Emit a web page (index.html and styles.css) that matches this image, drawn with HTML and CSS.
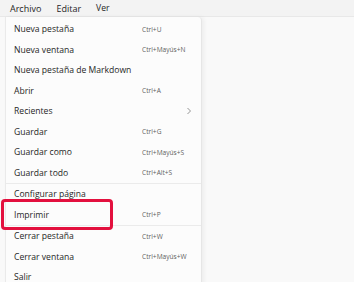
FILE: index.html
```html
<!DOCTYPE html>
<html lang="es">
<head>
  <meta charset="UTF-8">
  <title>Bloc de notas</title>
  <link rel="stylesheet" href="styles.css">
</head>
<body>
  <nav class="menubar">
    <span class="menubar-item">Archivo</span>
    <span class="menubar-item">Editar</span>
    <span class="menubar-item">Ver</span>
  </nav>
  <div class="workspace">
    <ul class="menu">
      <li class="menu-item"><span>Nueva pestaña</span><span class="shortcut">Ctrl+U</span></li>
      <li class="menu-item"><span>Nueva ventana</span><span class="shortcut">Ctrl+Mayús+N</span></li>
      <li class="menu-item"><span>Nueva pestaña de Markdown</span></li>
      <li class="menu-item"><span>Abrir</span><span class="shortcut">Ctrl+A</span></li>
      <li class="menu-item"><span>Recientes</span>
        <svg class="chevron" width="6" height="8" viewBox="0 0 6 8"><path d="M1.5 1 L4.5 4 L1.5 7" fill="none" stroke="#888" stroke-width="0.9"/></svg>
      </li>
      <li class="menu-item"><span>Guardar</span><span class="shortcut">Ctrl+G</span></li>
      <li class="menu-item"><span>Guardar como</span><span class="shortcut">Ctrl+Mayús+S</span></li>
      <li class="menu-item"><span>Guardar todo</span><span class="shortcut">Ctrl+Alt+S</span></li>
      <li class="separator"></li>
      <li class="menu-item"><span>Configurar página</span></li>
      <li class="menu-item highlighted"><span>Imprimir</span><span class="shortcut">Ctrl+P</span></li>
      <li class="separator"></li>
      <li class="menu-item"><span>Cerrar pestaña</span><span class="shortcut">Ctrl+W</span></li>
      <li class="menu-item"><span>Cerrar ventana</span><span class="shortcut">Ctrl+Mayús+W</span></li>
      <li class="menu-item"><span>Salir</span></li>
    </ul>
  </div>
</body>
</html>
```

FILE: styles.css
```css
*,
*::before,
*::after {
  box-sizing: border-box;
}

html,
body {
  margin: 0;
  padding: 0;
  height: 100%;
  overflow: hidden;
  background: #f9f9f9;
  font-family: 'Open Sans', sans-serif;
  color: #262626;
}

.menubar {
  display: flex;
  align-items: center;
  height: 17px;
  padding-left: 4px;
  background: #f3f3f3;
  border-bottom: 1px solid #e8e8e8;
  font-size: 9px;
}

.menubar-item {
  padding: 0 6px;
  margin-right: 3px;
}

.menubar-item:last-child {
  font-size: 8.6px;
}

.workspace {
  padding-left: 5px;
}

.menu {
  list-style: none;
  margin: 0;
  padding: 2px 0 0;
  width: 197px;
  background: #fcfcfc;
  border-left: 1px solid #eaeaea;
  border-right: 1px solid #e6e6e6;
  border-radius: 0 4px 0 0;
  box-shadow: 2px 0 4px rgba(0, 0, 0, 0.05);
  font-size: 8.6px;
}

.menu-item {
  position: relative;
  display: flex;
  align-items: center;
  height: 20.5px;
  padding-left: 8px;
}

.menu-item > span:first-child {
  width: 128px;
}

.shortcut {
  font-size: 6.6px;
  color: #5f5f5f;
}

.chevron {
  margin-left: 44px;
}

.separator {
  height: 1px;
  background: #ebebeb;
}

.highlighted::after {
  content: '';
  position: absolute;
  left: -5px;
  top: -6px;
  width: 112px;
  height: 31px;
  border: 3px solid #e3103e;
  border-radius: 4px;
}
```
